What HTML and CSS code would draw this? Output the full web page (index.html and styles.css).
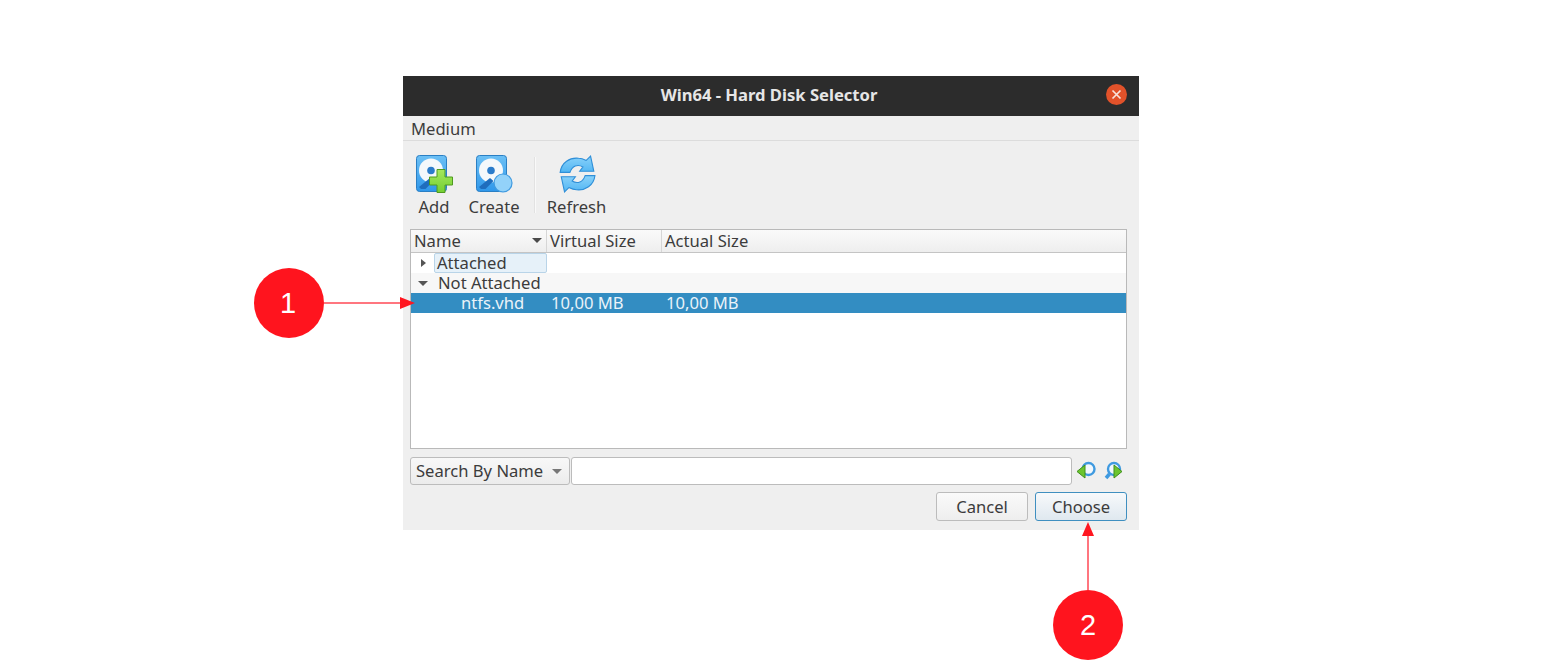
FILE: index.html
```html
<!DOCTYPE html>
<html lang="en">
  <head>
    <meta charset="UTF-8" />
    <meta name="viewport" content="width=device-width, initial-scale=1.0" />
    <title>Hard Disk Selector</title>
    <link rel="stylesheet" href="styles.css">
  </head>
  <body>
    <svg class="defs" width="0" height="0">
      <defs>
        <linearGradient id="diskFill" x1="0" y1="0" x2="0" y2="1">
          <stop offset="0" stop-color="#6cc0f5"/>
          <stop offset="1" stop-color="#2f97ea"/>
        </linearGradient>
        <linearGradient id="refreshFill" x1="0" y1="0" x2="0" y2="1">
          <stop offset="0" stop-color="#8ad2fa"/>
          <stop offset="1" stop-color="#52b6f3"/>
        </linearGradient>
        <linearGradient id="plusFill" x1="0" y1="0" x2="0" y2="1">
          <stop offset="0" stop-color="#a5e85c"/>
          <stop offset="1" stop-color="#74cf33"/>
        </linearGradient>
      </defs>
    </svg>

    <div class="dialog">
      <div class="titlebar">
        <span class="title">Win64 - Hard Disk Selector</span>
        <span class="close">
          <svg width="11" height="11" viewBox="0 0 11 11"><path d="M1.500 1.500l8 8M9.500 1.500l-8 8" stroke="#f8e4dc" stroke-width="1.700" fill="none"/></svg>
        </span>
      </div>
      <div class="menubar">Medium</div>

      <div class="toolbar">
        <div class="tool tool-add">
          <svg width="38" height="38" viewBox="0 0 38 38">
            <rect x="1.500" y="0.500" width="30" height="36" rx="3" fill="url(#diskFill)" stroke="#2a7fc4"/>
            <circle cx="16" cy="15.500" r="12" fill="#f4f8fb"/>
            <circle cx="16" cy="15.500" r="3.800" fill="#2b7ccb"/>
            <path d="M4 32l11-9 3.500 3-8 8H6z" fill="#1f6dbd"/>
            <path d="M22 14.500h8v7.500h7.500v8H30v7.500h-8V30h-7.500v-8H22z" fill="url(#plusFill)" stroke="#4f9a1f"/>
          </svg>
          <span>Add</span>
        </div>
        <div class="tool tool-create">
          <svg width="38" height="38" viewBox="0 0 38 38">
            <rect x="1.500" y="0.500" width="30" height="36" rx="3" fill="url(#diskFill)" stroke="#2a7fc4"/>
            <circle cx="16" cy="15.500" r="12" fill="#f4f8fb"/>
            <circle cx="16" cy="15.500" r="3.800" fill="#2b7ccb"/>
            <path d="M4 32l11-9 3.500 3-8 8H6z" fill="#1f6dbd"/>
            <circle cx="28" cy="28" r="9" fill="#93d2f9" stroke="#3f9ae0" stroke-width="1.200"/>
          </svg>
          <span>Create</span>
        </div>
        <div class="tool-sep"></div>
        <div class="tool tool-refresh">
          <svg width="38" height="38" viewBox="2 1 33 35">
            <path d="M3 17C4 8 12 3 20 4c3 0 5 1 7 2l4-4 3 14H21l3-4c-5-3-10-1-12 5z" fill="url(#refreshFill)" stroke="#2f8fd8"/>
            <path d="M35 20c-1 9-9 14-17 13-3 0-5-1-7-2l-4 4-3-14h13l-3 4c5 3 10 1 12-5z" fill="url(#refreshFill)" stroke="#2f8fd8"/>
          </svg>
          <span>Refresh</span>
        </div>
      </div>

      <div class="tree">
        <div class="tree-head">
          <div class="head-cell head-name">Name<span class="sort-arrow"></span></div>
          <div class="head-cell head-virtual">Virtual Size</div>
          <div class="head-cell">Actual Size</div>
        </div>
        <div class="row">
          <span class="branch branch-closed"></span>
          <span class="group group-current">Attached</span>
        </div>
        <div class="row row-alt">
          <span class="branch branch-open"></span>
          <span class="group">Not Attached</span>
        </div>
        <div class="row row-selected">
          <span class="file-name">ntfs.vhd</span>
          <span class="file-virtual">10,00 MB</span>
          <span>10,00 MB</span>
        </div>
      </div>

      <div class="search">
        <div class="combo">Search By Name<span class="combo-arrow"></span></div>
        <div class="search-input"></div>
        <svg class="search-btn" width="21" height="21" viewBox="0 0 21 21">
          <circle cx="12.500" cy="8" r="6" fill="#f2f8fd" stroke="#3f9ae0" stroke-width="2.400"/>
          <path d="M9 4v13L1 10.500z" fill="#6cc52e" stroke="#3f8f1c"/>
        </svg>
        <svg class="search-btn" width="21" height="21" viewBox="0 0 21 21">
          <circle cx="10" cy="8" r="6" fill="#f2f8fd" stroke="#3f9ae0" stroke-width="2.400"/>
          <path d="M5.500 13l-3.500 4" stroke="#3f9ae0" stroke-width="3.500"/>
          <path d="M10 4v13l8-6.500z" fill="#6cc52e" stroke="#3f8f1c"/>
        </svg>
      </div>

      <div class="actions">
        <button class="btn">Cancel</button>
        <button class="btn btn-default">Choose</button>
      </div>
    </div>

    <!-- annotations over the screenshot -->
    <svg class="arrows" width="1542" height="668">
      <path d="M324 303H402M1088 590V534" stroke="#ff4a55" stroke-width="1.500" fill="none"/>
      <path d="M400 297l15 6-15 6zM1088 522l6 14h-12z" fill="#ff1620"/>
    </svg>
    <div class="callout callout-one">1</div>
    <div class="callout callout-two">2</div>
  </body>
</html>
```

FILE: styles.css
```css
body {
  margin: 0;
  padding-top: 76px;
  background-color: #fff;
  font-family: "Noto Sans", sans-serif;
  font-size: 16.6px;
  color: #3c3c3c;
}
.defs {
  position: absolute;
}
.dialog {
  width: 736px;
  height: 454px;
  margin: 0 auto;
  background-color: #efefef;
  display: flex;
  flex-direction: column;
}
.titlebar {
  height: 40px;
  flex: none;
  background-color: #2c2c2c;
  display: flex;
  align-items: center;
  justify-content: center;
  position: relative;
}
.title {
  color: #e6e6e6;
  font-weight: bold;
  line-height: 38px;
  height: 40px;
  margin-right: 4px;
}
.close {
  position: absolute;
  right: 12px;
  top: 8px;
  width: 21px;
  height: 21px;
  border-radius: 50%;
  background-color: #e2522a;
  display: flex;
  align-items: center;
  justify-content: center;
}
.menubar {
  height: 24px;
  flex: none;
  padding-left: 8px;
  line-height: 26px;
  border-bottom: 1px solid #dcdcdc;
}
.toolbar {
  height: 88px;
  flex: none;
  display: flex;
  padding: 14px 0 0 12px;
  box-sizing: border-box;
}
.tool {
  display: flex;
  flex-direction: column;
  align-items: center;
  line-height: 22px;
}
.tool svg {
  margin-bottom: 3px;
}
.tool-add {
  width: 38px;
}
.tool-create {
  width: 52px;
  margin-left: 15px;
}
.tool-refresh {
  width: 61px;
}
.tool-sep {
  width: 1px;
  height: 56px;
  margin: 2px 10px 0 14px;
  background-color: #f9f9f9;
  border-left: 1px solid #e2e2e2;
}
.tree {
  height: 220px;
  flex: none;
  margin: 0 12px 0 7px;
  box-sizing: border-box;
  background-color: #fff;
  border: 1px solid #b9b9b9;
}
.tree-head {
  height: 23px;
  box-sizing: border-box;
  display: flex;
  background: linear-gradient(#fafafa, #eeeeee);
  border-bottom: 1px solid #c4c4c4;
  line-height: 22px;
}
.head-cell {
  padding-left: 3px;
}
.head-name {
  width: 132px;
  border-right: 1px solid #d6d6d6;
  position: relative;
}
.head-virtual {
  width: 111px;
  border-right: 1px solid #d6d6d6;
}
.sort-arrow {
  position: absolute;
  right: 4px;
  top: 8px;
  border-left: 5px solid transparent;
  border-right: 5px solid transparent;
  border-top: 5px solid #4a4a4a;
}
.row {
  height: 20px;
  line-height: 20px;
  display: flex;
  align-items: center;
  position: relative;
}
.row-alt {
  background-color: #f7f7f7;
}
.row-selected {
  background-color: #338dc2;
  color: #eaf3f9;
}
.branch {
  width: 0;
  height: 0;
}
.branch-closed {
  margin-left: 10px;
  border-top: 4px solid transparent;
  border-bottom: 4px solid transparent;
  border-left: 5px solid #555;
}
.branch-open {
  margin-left: 7px;
  border-left: 5px solid transparent;
  border-right: 5px solid transparent;
  border-top: 5px solid #555;
}
.group {
  margin-left: 9px;
  padding: 0 2px;
}
.branch-open + .group {
  margin-left: 8px;
}
.group-current {
  margin-left: 8px;
  width: 113px;
  box-sizing: border-box;
  background-color: #e6f1f9;
  border: 1px solid #b9d4e8;
  border-radius: 2px;
  line-height: 18px;
  height: 20px;
}
.file-name {
  margin-left: 50px;
  width: 90px;
}
.file-virtual {
  width: 115px;
}
.search {
  height: 28px;
  flex: none;
  margin: 8px 12px 0 7px;
  display: flex;
  align-items: center;
}
.combo {
  width: 160px;
  height: 28px;
  line-height: 26px;
  box-sizing: border-box;
  padding-left: 5px;
  border: 1px solid #bcbcbc;
  border-radius: 3px;
  background: linear-gradient(#f8f8f8, #ececec);
  position: relative;
}
.combo-arrow {
  position: absolute;
  right: 7px;
  top: 11px;
  border-left: 5px solid transparent;
  border-right: 5px solid transparent;
  border-top: 5px solid #777;
}
.search-input {
  width: 501px;
  height: 28px;
  margin-left: 1px;
  box-sizing: border-box;
  background-color: #fff;
  border: 1px solid #bcbcbc;
  border-radius: 3px;
  margin-right: 4px;
}
.search-btn {
  margin-right: 7px;
}
.search-btn:last-child {
  margin-right: 0;
}
.actions {
  display: flex;
  justify-content: flex-end;
  gap: 7px;
  margin: 7px 12px 0 0;
}
.btn {
  width: 92px;
  height: 29px;
  padding: 0;
  border: 1px solid #bcbcbc;
  border-radius: 3px;
  background: linear-gradient(#fafafa, #eeeeee);
  font-family: inherit;
  font-size: 16.6px;
  color: #3c3c3c;
}
.btn-default {
  border-color: #3f8fc0;
  background: linear-gradient(#f7f9fb, #dfe8ef);
}
.arrows {
  position: absolute;
  left: 0;
  top: 0;
}
.callout {
  position: absolute;
  width: 70px;
  height: 70px;
  border-radius: 50%;
  background-color: #ff141e;
  color: #fff;
  font-family: "Liberation Sans", sans-serif;
  font-size: 29px;
  line-height: 70px;
  text-align: center;
}
.callout-one {
  left: 254px;
  top: 268px;
  text-indent: -2px;
}
.callout-two {
  left: 1053px;
  top: 590px;
}
```
